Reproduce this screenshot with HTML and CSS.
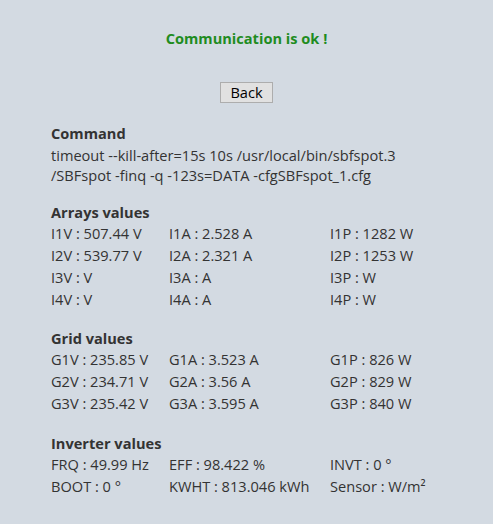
FILE: index.html
```html
<!DOCTYPE html>
<html>
<head>
<meta charset="utf-8">
<link rel="stylesheet" href="styles.css">
</head>
<body>
<div class="page">
  <h1 class="status">Communication is ok !</h1>
  <div class="actions"><button class="back">Back</button></div>
  <section class="block">
    <h2 class="heading">Command</h2>
    <p class="command">timeout --kill-after=15s 10s /usr/local/bin/sbfspot.3<br>/SBFspot -finq -q -123s=DATA -cfgSBFspot_1.cfg</p>
  </section>
  <section class="block">
    <h2 class="heading">Arrays values</h2>
    <div class="grid">
      <span>I1V : 507.44 V</span><span>I1A : 2.528 A</span><span>I1P : 1282 W</span>
      <span>I2V : 539.77 V</span><span>I2A : 2.321 A</span><span>I2P : 1253 W</span>
      <span>I3V : V</span><span>I3A : A</span><span>I3P : W</span>
      <span>I4V : V</span><span>I4A : A</span><span>I4P : W</span>
    </div>
  </section>
  <section class="block">
    <h2 class="heading">Grid values</h2>
    <div class="grid">
      <span>G1V : 235.85 V</span><span>G1A : 3.523 A</span><span>G1P : 826 W</span>
      <span>G2V : 234.71 V</span><span>G2A : 3.56 A</span><span>G2P : 829 W</span>
      <span>G3V : 235.42 V</span><span>G3A : 3.595 A</span><span>G3P : 840 W</span>
    </div>
  </section>
  <section class="block">
    <h2 class="heading">Inverter values</h2>
    <div class="grid">
      <span>FRQ : 49.99 Hz</span><span>EFF : 98.422 %</span><span>INVT : 0 °</span>
      <span>BOOT : 0 °</span><span>KWHT : 813.046 kWh</span><span>Sensor : W/m²</span>
    </div>
  </section>
</div>
</body>
</html>
```

FILE: styles.css
```css
html, body {
  margin: 0;
  padding: 0;
  background: #d3dae2;
}
body {
  font-family: "Open Sans", "Noto Sans", sans-serif;
  color: #333333;
  font-size: 14.6px;
}
.page {
  padding: 28px 0 0 0;
}
.status {
  margin: 0;
  text-align: center;
  color: #1f8c1f;
  font-size: 14.6px;
  font-weight: 700;
  line-height: 20px;
}
.actions {
  display: flex;
  justify-content: center;
  margin-top: 34px;
}
.back {
  font-family: "Open Sans", "Noto Sans", sans-serif;
  font-size: 14.6px;
  color: #000;
  background: #e1e1e1;
  border: 1px solid #adadad;
  border-radius: 0;
  padding: 0 9px;
  height: 21px;
  line-height: 19px;
}
.block {
  padding-left: 51px;
  margin-top: 17.5px;
}
.actions + .block {
  margin-top: 21px;
}
.heading {
  margin: 0;
  font-size: 14.6px;
  font-weight: 700;
  line-height: 19px;
}
.command {
  margin: 2px 0 0 0;
  line-height: 20px;
}
.grid {
  display: grid;
  grid-template-columns: 118px 161px 1fr;
  grid-auto-rows: 22px;
  line-height: 22px;
  padding-bottom: 2px;
}
```
